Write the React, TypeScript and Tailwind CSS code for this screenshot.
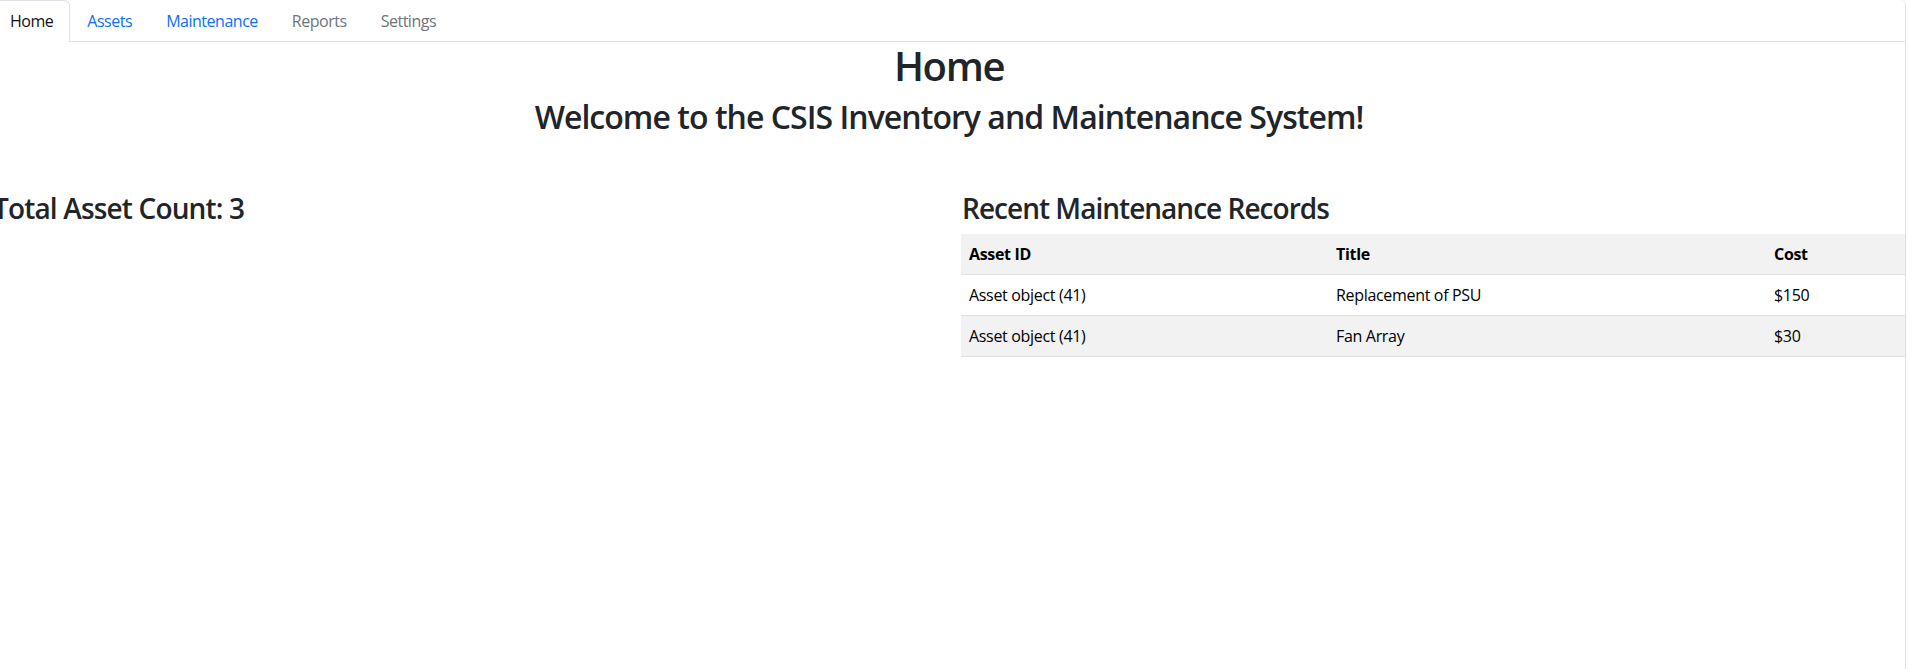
import React from 'react';

const tabs = [
  { label: 'Home', active: true, color: 'text-[#111]' },
  { label: 'Assets', active: false, color: 'text-[#0d6efd]' },
  { label: 'Maintenance', active: false, color: 'text-[#0d6efd]' },
  { label: 'Reports', active: false, color: 'text-[#6c757d]' },
  { label: 'Settings', active: false, color: 'text-[#6c757d]' },
];

const records = [
  { asset: 'Asset object (41)', title: 'Replacement of PSU', cost: '$150' },
  { asset: 'Asset object (41)', title: 'Fan Array', cost: '$30' },
];

function App() {
  return (
    <div className="min-h-screen w-full overflow-hidden bg-white font-['Open_Sans',sans-serif] text-[#212529]">
      <div className="ml-[-7px] w-[1913px] min-h-[669px] border-r border-[#dee2e6] rounded-tr-md">
        {/* Tabs */}
        <ul className="flex border-b border-[#dee2e6]">
          {tabs.map((tab) => (
            <li key={tab.label} className="-mb-px">
              <span
                className={`block px-4 py-2 text-base leading-6 tracking-[-0.03em] rounded-t-md border ${
                  tab.active ? 'border-[#dee2e6] border-b-white bg-white' : 'border-transparent'
                } ${tab.color}`}
              >
                {tab.label}
              </span>
            </li>
          ))}
        </ul>

        {/* Header */}
        <div className="text-center">
          <h1 className="text-[40px] font-semibold leading-[1.2] tracking-[-0.035em] mb-2">Home</h1>
          <h2 className="text-[32px] font-semibold leading-[1.2] tracking-[-0.03em] mb-2">
            Welcome to the CSIS Inventory and Maintenance System!
          </h2>
        </div>

        {/* Content */}
        <div className="flex mt-14">
          <div className="flex-1">
            <h3 className="text-[28px] font-semibold leading-[1.2] tracking-[-0.03em] mb-2">Total Asset Count: 3</h3>
          </div>
          <div className="w-[944px]">
            <h3 className="text-[28px] font-semibold leading-[1.2] tracking-[-0.035em] mb-2 pl-px">
              Recent Maintenance Records
            </h3>
            <table className="w-full table-fixed border-collapse text-base leading-6 tracking-[-0.02em]">
              <colgroup>
                <col className="w-[367px]" />
                <col className="w-[438px]" />
                <col className="w-[139px]" />
              </colgroup>
              <thead className="bg-[#f2f2f2]">
                <tr className="border-b border-[#dee2e6]">
                  <th className="px-2 py-2 text-left font-bold text-black">Asset ID</th>
                  <th className="px-2 py-2 text-left font-bold text-black">Title</th>
                  <th className="px-2 py-2 text-left font-bold text-black">Cost</th>
                </tr>
              </thead>
              <tbody>
                {records.map((r, i) => (
                  <tr key={i} className={`border-b border-[#dee2e6] ${i % 2 === 1 ? 'bg-[#f2f2f2]' : 'bg-white'}`}>
                    <td className="px-2 py-2 text-black">{r.asset}</td>
                    <td className="px-2 py-2 text-black">{r.title}</td>
                    <td className="px-2 py-2 text-black">{r.cost}</td>
                  </tr>
                ))}
              </tbody>
            </table>
          </div>
        </div>
      </div>
    </div>
  );
}

export default App;
